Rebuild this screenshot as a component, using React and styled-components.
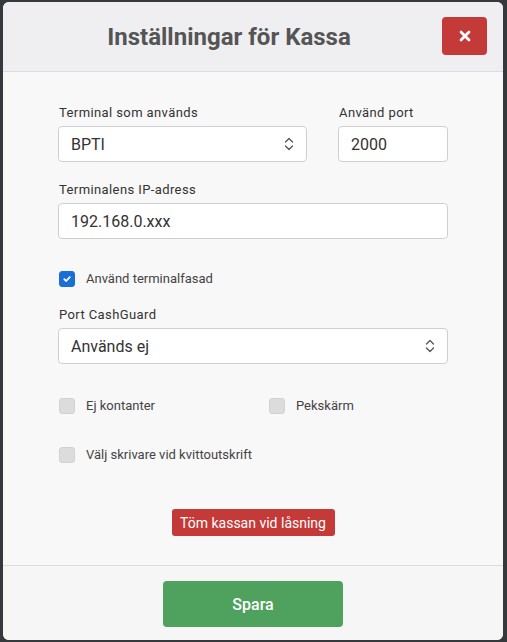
import React from "react";
import styled, { createGlobalStyle } from "styled-components";

const Global = createGlobalStyle`
  html, body { margin: 0; padding: 0; }
  body {
    font-family: Roboto, "Liberation Sans", sans-serif;
    background: #373a3d;
    width: 507px;
    height: 642px;
    overflow: hidden;
  }
`;

const Backdrop = styled.div`
  width: 507px;
  height: 642px;
  box-sizing: border-box;
  padding: 2px 4px 2px 3px;
  background: #35393c;
  display: flex;
`;

const Modal = styled.div`
  flex: 1;
  display: flex;
  flex-direction: column;
  background: #f8f8f8;
  border-radius: 6px;
  overflow: hidden;
`;

const Header = styled.div`
  height: 70px;
  box-sizing: border-box;
  background: #efeff1;
  border-bottom: 1px solid #dcdcdf;
  display: flex;
  align-items: center;
  padding: 0 16px;
  gap: 3px;
  flex-shrink: 0;
`;

const Title = styled.h1`
  flex: 1;
  margin: 0;
  text-align: center;
  font-size: 24px;
  font-weight: 700;
  color: #555555;
  letter-spacing: 0px;
  padding-top: 1px;
`;

const CloseButton = styled.button`
  width: 45px;
  height: 38px;
  margin-top: -1px;
  border: none;
  border-radius: 4px;
  background: #c43a38;
  display: flex;
  align-items: center;
  justify-content: center;
  padding: 0;
`;

const Body = styled.div`
  flex: 1;
  padding: 33px 55px 0 55px;
  display: flex;
  flex-direction: column;
`;

const Row = styled.div`
  display: flex;
  gap: 31px;
  margin-bottom: ${(p) => p.$mb || 0}px;
`;

const Field = styled.div`
  display: flex;
  flex-direction: column;
  width: ${(p) => (p.$w ? `${p.$w}px` : "auto")};
  flex: ${(p) => (p.$w ? "none" : 1)};
`;

const Label = styled.label`
  font-size: 13px;
  color: #333;
  letter-spacing: 0.4px;
  line-height: 16px;
  margin-bottom: 5px;
  padding-left: 1px;
`;

const Box = styled.div`
  height: 36px;
  box-sizing: border-box;
  border: 1px solid #cfcfcf;
  border-radius: 4px;
  background: #fff;
  display: flex;
  align-items: center;
  padding: 0 12px;
  font-size: 16px;
  color: #333;
  justify-content: space-between;
`;

const CheckRow = styled.div`
  display: flex;
  align-items: center;
  margin-bottom: ${(p) => p.$mb || 0}px;
`;

const CheckItem = styled.div`
  display: flex;
  align-items: center;
  width: ${(p) => p.$w || "auto"};
`;

const Check = styled.span`
  width: 16px;
  height: 16px;
  box-sizing: border-box;
  border-radius: 3px;
  margin-left: 1px;
  margin-right: 11px;
  display: flex;
  align-items: center;
  justify-content: center;
  background: ${(p) => (p.$on ? "#1a6fd6" : "#dcdcdc")};
  border: 1px solid ${(p) => (p.$on ? "#1a6fd6" : "#d2d2d2")};
`;

const CheckText = styled.span`
  font-size: 13px;
  color: #444;
  line-height: 16px;
`;

const Center = styled.div`
  display: flex;
  justify-content: center;
`;

const DangerButton = styled.button`
  height: 27px;
  border: none;
  border-radius: 3px;
  background: #c43a38;
  color: #fff;
  font-family: Roboto, "Liberation Sans", sans-serif;
  font-size: 14px;
  padding: 0 8px;
  width: 163px;
`;

const Footer = styled.div`
  height: 75px;
  border-top: 1px solid #dcdcdf;
  background: #f6f6f6;
  display: flex;
  justify-content: center;
  padding-top: 15px;
  box-sizing: border-box;
  flex-shrink: 0;
`;

const SaveButton = styled.button`
  width: 180px;
  height: 46px;
  border: none;
  border-radius: 4px;
  background: #4fa15e;
  color: #fff;
  font-family: Roboto, "Liberation Sans", sans-serif;
  font-size: 16px;
  font-weight: 500;
`;

const Chevrons = () => (
  <svg width="10" height="16" viewBox="0 0 10 16" fill="none" stroke="#555" strokeWidth="1.3" strokeLinecap="round" strokeLinejoin="round">
    <path d="M1.5 6 L5 2.5 L8.5 6" />
    <path d="M1.5 10 L5 13.5 L8.5 10" />
  </svg>
);

const Tick = () => (
  <svg width="10" height="10" viewBox="0 0 10 10" fill="none" stroke="#fff" strokeWidth="1.8" strokeLinecap="round" strokeLinejoin="round">
    <path d="M2.3 5.2 L4.2 7 L7.8 3.2" />
  </svg>
);

const XIcon = () => (
  <svg width="12" height="12" viewBox="0 0 12 12" stroke="#fff" strokeWidth="2.8" strokeLinecap="round">
    <path d="M2 2 L10 10 M10 2 L2 10" />
  </svg>
);

export default function App() {
  return (
    <>
      <Global />
      <Backdrop>
        <Modal>
          <Header>
            <Title>Inställningar för Kassa</Title>
            <CloseButton aria-label="Stäng">
              <XIcon />
            </CloseButton>
          </Header>
          <Body>
            <Row $mb={20}>
              <Field>
                <Label>Terminal som används</Label>
                <Box>
                  BPTI
                  <Chevrons />
                </Box>
              </Field>
              <Field $w={110}>
                <Label>Använd port</Label>
                <Box>2000</Box>
              </Field>
            </Row>
            <Row $mb={32}>
              <Field>
                <Label>Terminalens IP-adress</Label>
                <Box>192.168.0.xxx</Box>
              </Field>
            </Row>
            <CheckRow $mb={20}>
              <CheckItem>
                <Check $on>
                  <Tick />
                </Check>
                <CheckText>Använd terminalfasad</CheckText>
              </CheckItem>
            </CheckRow>
            <Row $mb={34}>
              <Field>
                <Label>Port CashGuard</Label>
                <Box>
                  Används ej
                  <Chevrons />
                </Box>
              </Field>
            </Row>
            <CheckRow $mb={33}>
              <CheckItem $w="210px">
                <Check />
                <CheckText>Ej kontanter</CheckText>
              </CheckItem>
              <CheckItem>
                <Check />
                <CheckText>Pekskärm</CheckText>
              </CheckItem>
            </CheckRow>
            <CheckRow $mb={46}>
              <CheckItem>
                <Check />
                <CheckText>Välj skrivare vid kvittoutskrift</CheckText>
              </CheckItem>
            </CheckRow>
            <Center>
              <DangerButton>Töm kassan vid låsning</DangerButton>
            </Center>
          </Body>
          <Footer>
            <SaveButton>Spara</SaveButton>
          </Footer>
        </Modal>
      </Backdrop>
    </>
  );
}
